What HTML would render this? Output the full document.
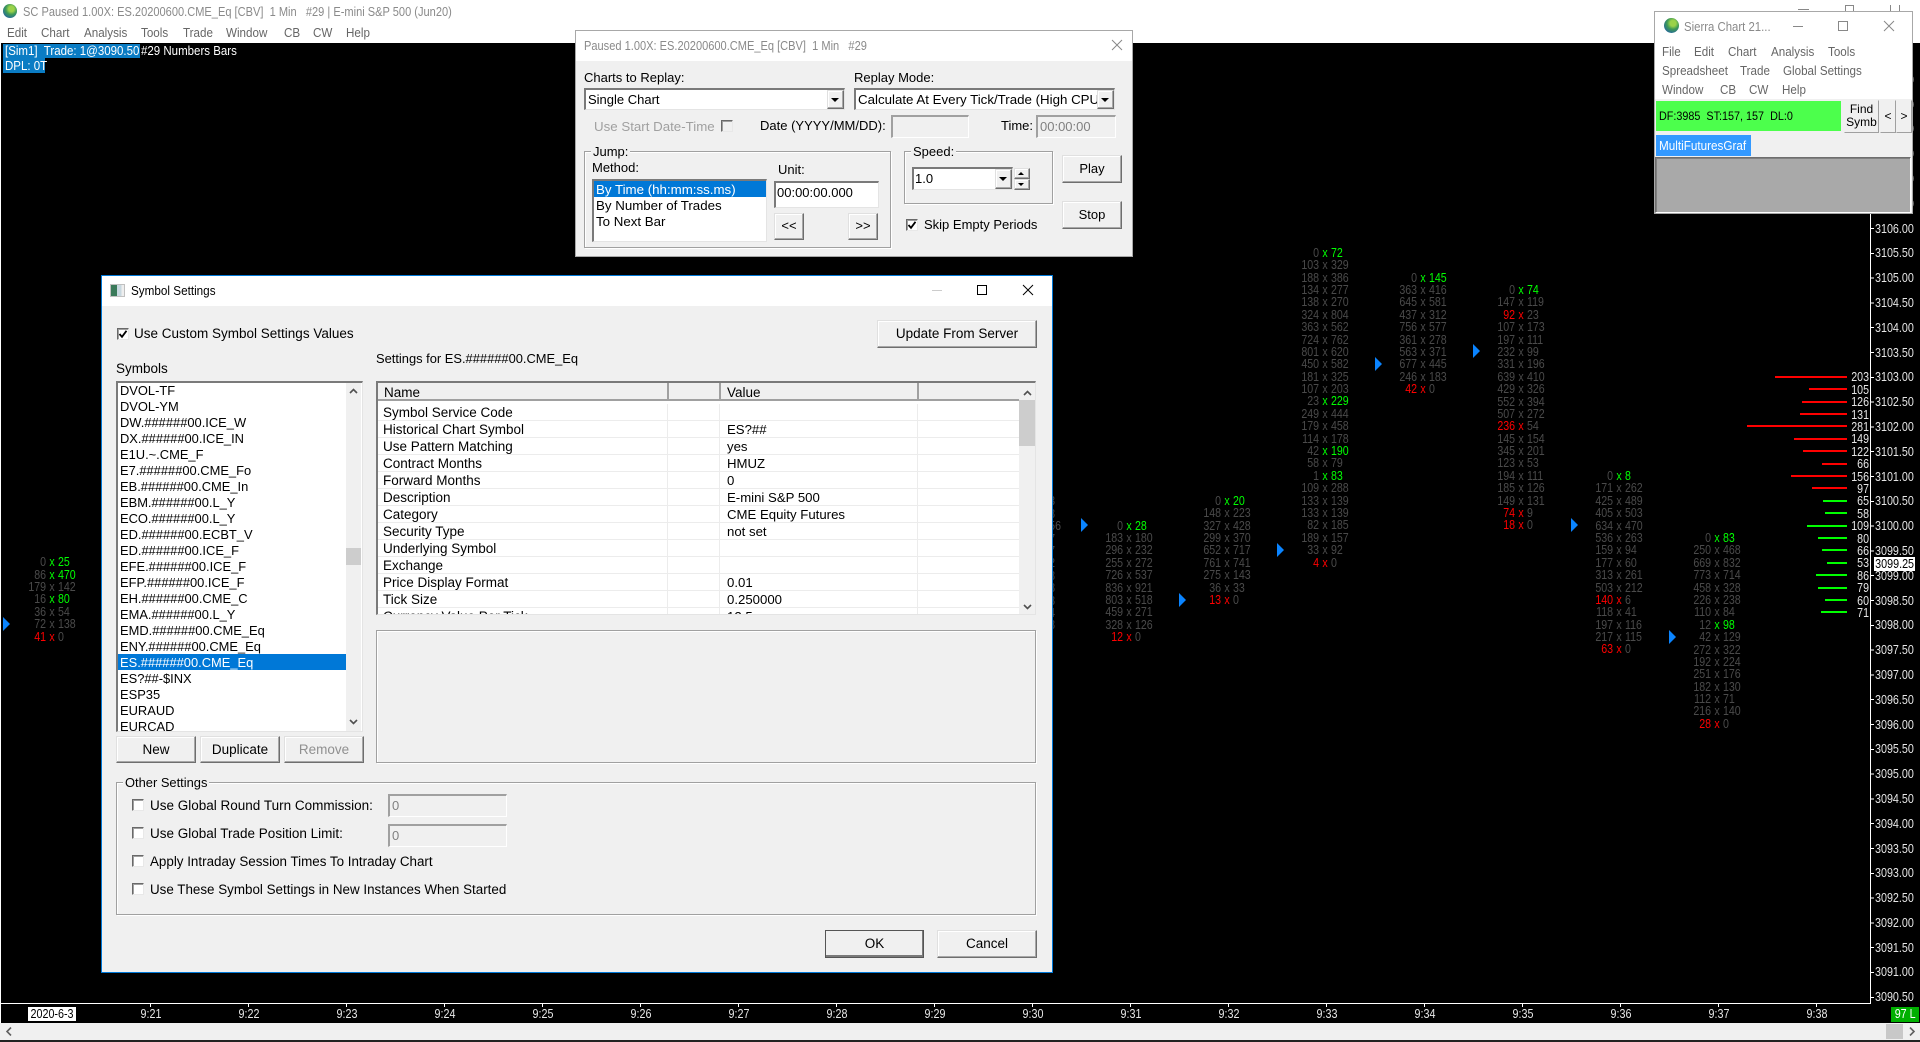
<!DOCTYPE html>
<html><head><meta charset="utf-8"><title>Sierra Chart</title>
<style>
html,body{margin:0;padding:0;width:1920px;height:1042px;overflow:hidden;background:#fff;font-family:"Liberation Sans",sans-serif;}
div{box-sizing:border-box}
.a{position:absolute}
.t{position:absolute;white-space:pre;line-height:16px;font-size:13px;color:#000;margin-top:1px}
.m{position:absolute;white-space:pre;line-height:16px;font-size:12.5px;color:#666;transform:scaleX(.93);transform-origin:0 0}
.btn{position:absolute;background:#f0f0f0;border:1px solid;border-color:#e0e0e0 #6e6e6e #6e6e6e #e0e0e0;box-shadow:inset -1px -1px 0 #a8a8a8,inset 1px 1px 0 #fff;text-align:center;font-size:13px;color:#000;display:flex;align-items:center;justify-content:center;white-space:pre;padding-bottom:2px}
.sunk{position:absolute;background:#fff;border-style:solid;border-width:2px 1px 1px 2px;border-color:#7a7a7a #e4e4e4 #e4e4e4 #7a7a7a}
.dis{background:#f0f0f0;border-color:#a0a0a0 #fff #fff #a0a0a0;color:#808080;font-size:13px;line-height:20px;padding-left:2px}
.grp{position:absolute;border:1px solid #a0a0a0;box-shadow:inset 1px 1px 0 #fff,1px 1px 0 #fff}
.cb{position:absolute;width:12px;height:12px;background:#fff;border:1px solid;border-color:#696969 #e8e8e8 #e8e8e8 #696969;box-shadow:inset 1px 1px 0 #a0a0a0}
.lab{position:absolute;background:#f0f0f0;padding:0 2px;white-space:pre;font-size:13px;line-height:14px;margin-top:1px}
.dn{position:absolute;width:0;height:0;border-left:4px solid transparent;border-right:4px solid transparent;border-top:4px solid #000}
.up{position:absolute;width:0;height:0;border-left:4px solid transparent;border-right:4px solid transparent;border-bottom:4px solid #000}
.arr{position:absolute;width:0;height:0;border-top:7px solid transparent;border-bottom:7px solid transparent;border-left:7px solid #0a84ff}
.c{position:absolute;width:100px;font-size:12.5px;line-height:12.4px;color:#4a4a4a;transform:scaleX(.85);transform-origin:50px 0}
.c p,.col p{margin:0;height:12.4px;white-space:pre}
.c i{display:inline-block;width:43px;text-align:right;font-style:normal}
.c u{display:inline-block;width:14px;text-align:center;text-decoration:none}
.c s{text-decoration:none}
p.g u,p.g s{color:#0f0}
p.r i,p.r u{color:#f00}
.tm{position:absolute;top:1006px;width:40px;text-align:center;font-size:12.5px;line-height:16px;color:#e6e6e6;transform:scaleX(.86)}
.tk{position:absolute;top:1003px;width:1px;height:4px;background:#fff}
.vb{position:absolute;height:2px}
.rb{background:#f00}.gb{background:#0f0}
.gr{position:absolute;left:0;width:100%;height:17px;font-size:13.5px;line-height:17px;border-bottom:1px solid #ececec;white-space:pre}
.gr span{position:absolute;top:0}
.gr .n{left:5px}.gr .v{left:349px;font-size:13.2px}
.li p{margin:0;height:16px;line-height:18px;padding-left:2px;font-size:12.9px;white-space:pre}
.box{position:absolute;display:flex;justify-content:center;white-space:nowrap;font-size:12.5px}
.box span{display:block;flex:none;transform:scaleX(.86)}
</style></head>
<body>
<div class="a" style="left:0;top:0;width:1920px;height:43px;background:#fff"></div>
<div class="a" style="left:3px;top:4px;width:14px;height:14px;border-radius:50%;background:radial-gradient(circle at 60% 35%,#9bd24a 0 22%,#3f9a55 45%,#1f5fa8 85%)"></div>
<div class="m" style="left:23px;top:4px;font-size:12.5px;color:#8a8a8a;transform:scaleX(.885);transform-origin:0 0">SC Paused 1.00X: ES.20200600.CME_Eq [CBV]  1 Min   #29 | E-mini S&amp;P 500 (Jun20)</div>
<div class="m" style="left:7px;top:25px">Edit</div><div class="m" style="left:41px;top:25px">Chart</div><div class="m" style="left:84px;top:25px">Analysis</div><div class="m" style="left:141px;top:25px">Tools</div><div class="m" style="left:183px;top:25px">Trade</div><div class="m" style="left:226px;top:25px">Window</div><div class="m" style="left:284px;top:25px">CB</div><div class="m" style="left:313px;top:25px">CW</div><div class="m" style="left:346px;top:25px">Help</div>
<div class="a" style="left:1798px;top:9px;width:11px;height:1px;background:#888"></div>
<div class="a" style="left:1845px;top:5px;width:9px;height:7px;border:1px solid #888"></div>
<div class="a" style="left:1890px;top:5px;width:10px;height:6px;border-left:1px solid #888;border-right:1px solid #888"></div>

<!-- chart -->
<div class="a" style="left:1px;top:43px;width:1919px;height:980px;background:#000"></div>
<div class="a" style="left:3px;top:44px;width:137px;height:14px;background:#0a7cc4"></div>
<div class="a" style="left:3px;top:58px;width:42px;height:15px;background:#0a7cc4"></div>
<div class="t" style="left:5px;top:42px;color:#fff;font-size:12.5px;transform:scaleX(.92);transform-origin:0 0">[Sim1]  Trade: 1@3090.50</div>
<div class="t" style="left:141px;top:42px;color:#fff;font-size:12.5px;transform:scaleX(.92);transform-origin:0 0">#29 Numbers Bars</div>
<div class="t" style="left:5px;top:57px;color:#fff;font-size:12.5px;transform:scaleX(.92);transform-origin:0 0">DPL: 0T</div>

<div class="a" style="left:1870px;top:43px;width:1px;height:961px;background:#fff"></div>
<div class="a" style="left:0;top:1003px;width:1870px;height:1px;background:#fff"></div>
<div class="a" style="left:1871px;top:215.6px;width:3px;height:794px;background:repeating-linear-gradient(to bottom,transparent 0 12px,#fff 12px 13px,transparent 13px 24.8px)"></div>

<div class="a col" style="left:1875px;top:67.8px;font-size:12.5px;line-height:24.8px;color:#e6e6e6;transform:scaleX(.86);transform-origin:0 0;white-space:pre">3109.00
3108.50
3108.00
3107.50
3107.00
3106.50
3106.00
3105.50
3105.00
3104.50
3104.00
3103.50
3103.00
3102.50
3102.00
3101.50
3101.00
3100.50
3100.00
3099.50
3099.00
3098.50
3098.00
3097.50
3097.00
3096.50
3096.00
3095.50
3095.00
3094.50
3094.00
3093.50
3093.00
3092.50
3092.00
3091.50
3091.00
3090.50</div>
<div class="box" style="left:1874px;top:557px;width:41px;height:14px;background:#fff;color:#000;line-height:15px"><span>3099.25</span></div>

<!-- volume profile -->
<div class="vb rb" style="left:1775px;top:376px;width:72px"></div>
<div class="vb rb" style="left:1809px;top:388px;width:38px"></div>
<div class="vb rb" style="left:1802px;top:401px;width:45px"></div>
<div class="vb rb" style="left:1800px;top:413px;width:47px"></div>
<div class="vb rb" style="left:1747px;top:425px;width:100px"></div>
<div class="vb rb" style="left:1794px;top:438px;width:53px"></div>
<div class="vb rb" style="left:1803px;top:450px;width:44px"></div>
<div class="vb rb" style="left:1822px;top:463px;width:25px"></div>
<div class="vb rb" style="left:1791px;top:475px;width:56px"></div>
<div class="vb rb" style="left:1812px;top:487px;width:35px"></div>
<div class="vb gb" style="left:1823px;top:500px;width:24px"></div>
<div class="vb gb" style="left:1825px;top:512px;width:22px"></div>
<div class="vb gb" style="left:1807px;top:525px;width:40px"></div>
<div class="vb gb" style="left:1818px;top:537px;width:29px"></div>
<div class="vb gb" style="left:1822px;top:549px;width:25px"></div>
<div class="vb gb" style="left:1827px;top:562px;width:20px"></div>
<div class="vb gb" style="left:1816px;top:574px;width:31px"></div>
<div class="vb gb" style="left:1818px;top:587px;width:29px"></div>
<div class="vb gb" style="left:1825px;top:599px;width:22px"></div>
<div class="vb gb" style="left:1821px;top:611px;width:26px"></div>
<div class="a" style="left:1829px;top:371.3px;width:40px;text-align:right;font-size:12.5px;line-height:12.4px;color:#e6e6e6;transform:scaleX(.85);transform-origin:100% 0;white-space:pre">203
105
126
131
281
149
122
66
156
97
65
58
109
80
66
53
86
79
60
71</div>

<!-- arrows -->
<div class="arr" style="left:3px;top:617px"></div>
<div class="arr" style="left:1081px;top:518px"></div>
<div class="arr" style="left:1179px;top:593px"></div>
<div class="arr" style="left:1277px;top:543px"></div>
<div class="arr" style="left:1375px;top:357px"></div>
<div class="arr" style="left:1473px;top:344px"></div>
<div class="arr" style="left:1571px;top:518px"></div>
<div class="arr" style="left:1669px;top:630px"></div>

<!-- bars -->
<div class="c" style="left:1.7px;top:556.2px">
<p class="g"><i>0</i><u>x</u><s>25</s></p><p class="g"><i>86</i><u>x</u><s>470</s></p><p><i>179</i><u>x</u><s>142</s></p><p class="g"><i>16</i><u>x</u><s>80</s></p><p><i>36</i><u>x</u><s>54</s></p><p><i>72</i><u>x</u><s>138</s></p><p class="r"><i>41</i><u>x</u><s>0</s></p></div>
<div class="a" style="left:1025px;top:495.3px;width:30px;text-align:right;font-size:12.5px;line-height:12.4px;color:#4a4a4a;transform:scaleX(.85);transform-origin:100% 0;white-space:pre">3
8
 
7
7
2
8
8
8
4
8</div>
<div class="a" style="left:1031px;top:520px;width:30px;text-align:right;font-size:12.5px;line-height:12.4px;color:#4a4a4a;transform:scaleX(.85);transform-origin:100% 0">56</div>
<div class="c" style="left:1079.3px;top:519.6px">
<p class="g"><i>0</i><u>x</u><s>28</s></p><p><i>183</i><u>x</u><s>180</s></p><p><i>296</i><u>x</u><s>232</s></p><p><i>255</i><u>x</u><s>272</s></p><p><i>726</i><u>x</u><s>537</s></p><p><i>836</i><u>x</u><s>921</s></p><p><i>803</i><u>x</u><s>518</s></p><p><i>459</i><u>x</u><s>271</s></p><p><i>328</i><u>x</u><s>126</s></p><p class="r"><i>12</i><u>x</u><s>0</s></p></div>
<div class="c" style="left:1177.3px;top:494.8px">
<p class="g"><i>0</i><u>x</u><s>20</s></p><p><i>148</i><u>x</u><s>223</s></p><p><i>327</i><u>x</u><s>428</s></p><p><i>299</i><u>x</u><s>370</s></p><p><i>652</i><u>x</u><s>717</s></p><p><i>761</i><u>x</u><s>741</s></p><p><i>275</i><u>x</u><s>143</s></p><p><i>36</i><u>x</u><s>33</s></p><p class="r"><i>13</i><u>x</u><s>0</s></p></div>
<div class="c" style="left:1275.3px;top:246.8px">
<p class="g"><i>0</i><u>x</u><s>72</s></p><p><i>103</i><u>x</u><s>329</s></p><p><i>188</i><u>x</u><s>386</s></p><p><i>134</i><u>x</u><s>277</s></p><p><i>138</i><u>x</u><s>270</s></p><p><i>324</i><u>x</u><s>804</s></p><p><i>363</i><u>x</u><s>562</s></p><p><i>724</i><u>x</u><s>762</s></p><p><i>801</i><u>x</u><s>620</s></p><p><i>450</i><u>x</u><s>582</s></p><p><i>181</i><u>x</u><s>325</s></p><p><i>107</i><u>x</u><s>203</s></p><p class="g"><i>23</i><u>x</u><s>229</s></p><p><i>249</i><u>x</u><s>444</s></p><p><i>179</i><u>x</u><s>458</s></p><p><i>114</i><u>x</u><s>178</s></p><p class="g"><i>42</i><u>x</u><s>190</s></p><p><i>58</i><u>x</u><s>79</s></p><p class="g"><i>1</i><u>x</u><s>83</s></p><p><i>109</i><u>x</u><s>288</s></p><p><i>133</i><u>x</u><s>139</s></p><p><i>133</i><u>x</u><s>139</s></p><p><i>82</i><u>x</u><s>185</s></p><p><i>189</i><u>x</u><s>157</s></p><p><i>33</i><u>x</u><s>92</s></p><p class="r"><i>4</i><u>x</u><s>0</s></p></div>
<div class="c" style="left:1373.3px;top:271.6px">
<p class="g"><i>0</i><u>x</u><s>145</s></p><p><i>363</i><u>x</u><s>416</s></p><p><i>645</i><u>x</u><s>581</s></p><p><i>437</i><u>x</u><s>312</s></p><p><i>756</i><u>x</u><s>577</s></p><p><i>361</i><u>x</u><s>278</s></p><p><i>563</i><u>x</u><s>371</s></p><p><i>677</i><u>x</u><s>445</s></p><p><i>246</i><u>x</u><s>183</s></p><p class="r"><i>42</i><u>x</u><s>0</s></p></div>
<div class="c" style="left:1471.3px;top:284px">
<p class="g"><i>0</i><u>x</u><s>74</s></p><p><i>147</i><u>x</u><s>119</s></p><p class="r"><i>92</i><u>x</u><s>23</s></p><p><i>107</i><u>x</u><s>173</s></p><p><i>197</i><u>x</u><s>111</s></p><p><i>232</i><u>x</u><s>99</s></p><p><i>331</i><u>x</u><s>196</s></p><p><i>639</i><u>x</u><s>410</s></p><p><i>429</i><u>x</u><s>326</s></p><p><i>552</i><u>x</u><s>394</s></p><p><i>507</i><u>x</u><s>272</s></p><p class="r"><i>236</i><u>x</u><s>54</s></p><p><i>145</i><u>x</u><s>154</s></p><p><i>345</i><u>x</u><s>201</s></p><p><i>123</i><u>x</u><s>53</s></p><p><i>194</i><u>x</u><s>111</s></p><p><i>185</i><u>x</u><s>126</s></p><p><i>149</i><u>x</u><s>131</s></p><p class="r"><i>74</i><u>x</u><s>9</s></p><p class="r"><i>18</i><u>x</u><s>0</s></p></div>
<div class="c" style="left:1569.3px;top:470px">
<p class="g"><i>0</i><u>x</u><s>8</s></p><p><i>171</i><u>x</u><s>262</s></p><p><i>425</i><u>x</u><s>489</s></p><p><i>405</i><u>x</u><s>503</s></p><p><i>634</i><u>x</u><s>470</s></p><p><i>536</i><u>x</u><s>263</s></p><p><i>159</i><u>x</u><s>94</s></p><p><i>177</i><u>x</u><s>60</s></p><p><i>313</i><u>x</u><s>261</s></p><p><i>503</i><u>x</u><s>212</s></p><p class="r"><i>140</i><u>x</u><s>6</s></p><p><i>118</i><u>x</u><s>41</s></p><p><i>197</i><u>x</u><s>116</s></p><p><i>217</i><u>x</u><s>115</s></p><p class="r"><i>63</i><u>x</u><s>0</s></p></div>
<div class="c" style="left:1667.3px;top:532px">
<p class="g"><i>0</i><u>x</u><s>83</s></p><p><i>250</i><u>x</u><s>468</s></p><p><i>669</i><u>x</u><s>832</s></p><p><i>773</i><u>x</u><s>714</s></p><p><i>458</i><u>x</u><s>328</s></p><p><i>226</i><u>x</u><s>238</s></p><p><i>110</i><u>x</u><s>84</s></p><p class="g"><i>12</i><u>x</u><s>98</s></p><p><i>42</i><u>x</u><s>129</s></p><p><i>272</i><u>x</u><s>322</s></p><p><i>192</i><u>x</u><s>224</s></p><p><i>251</i><u>x</u><s>176</s></p><p><i>182</i><u>x</u><s>130</s></p><p><i>112</i><u>x</u><s>71</s></p><p><i>216</i><u>x</u><s>140</s></p><p class="r"><i>28</i><u>x</u><s>0</s></p></div>

<!-- time axis -->
<div class="tk" style="left:150px"></div><div class="tk" style="left:248px"></div><div class="tk" style="left:346px"></div><div class="tk" style="left:444px"></div><div class="tk" style="left:542px"></div><div class="tk" style="left:640px"></div><div class="tk" style="left:738px"></div><div class="tk" style="left:836px"></div><div class="tk" style="left:934px"></div><div class="tk" style="left:1032px"></div><div class="tk" style="left:1130px"></div><div class="tk" style="left:1228px"></div><div class="tk" style="left:1326px"></div><div class="tk" style="left:1424px"></div><div class="tk" style="left:1522px"></div><div class="tk" style="left:1620px"></div><div class="tk" style="left:1718px"></div><div class="tk" style="left:1816px"></div>
<div class="tm" style="left:130.7px">9:21</div><div class="tm" style="left:228.7px">9:22</div><div class="tm" style="left:326.7px">9:23</div><div class="tm" style="left:424.7px">9:24</div><div class="tm" style="left:522.7px">9:25</div><div class="tm" style="left:620.7px">9:26</div><div class="tm" style="left:718.7px">9:27</div><div class="tm" style="left:816.7px">9:28</div><div class="tm" style="left:914.7px">9:29</div><div class="tm" style="left:1012.7px">9:30</div><div class="tm" style="left:1110.7px">9:31</div><div class="tm" style="left:1208.7px">9:32</div><div class="tm" style="left:1306.7px">9:33</div><div class="tm" style="left:1404.7px">9:34</div><div class="tm" style="left:1502.7px">9:35</div><div class="tm" style="left:1600.7px">9:36</div><div class="tm" style="left:1698.7px">9:37</div><div class="tm" style="left:1796.7px">9:38</div>
<div class="box" style="left:28px;top:1007px;width:48px;height:14px;background:#fff;color:#000;line-height:14px"><span>2020-6-3</span></div>
<div class="box" style="left:1891px;top:1007px;width:28px;height:15px;background:#00b000;color:#fff;line-height:15px"><span>97 L</span></div>
<!-- bottom scroll -->
<div class="a" style="left:0;top:1023px;width:1920px;height:17px;background:#f0f0f0"></div>
<div class="a" style="left:1886px;top:1024px;width:17px;height:15px;background:#c8c8c8"></div>
<svg class="a" style="left:6px;top:1027px" width="6" height="9"><path d="M5 .5L1 4.5l4 4" fill="none" stroke="#606060" stroke-width="1.6"/></svg>
<svg class="a" style="left:1909px;top:1027px" width="6" height="9"><path d="M1 .5l4 4-4 4" fill="none" stroke="#606060" stroke-width="1.6"/></svg>
<div class="a" style="left:0;top:1040px;width:1920px;height:2px;background:#222"></div>

<!-- Replay dialog -->
<div class="a" style="left:575px;top:30px;width:558px;height:227px;background:#f0f0f0;border:1px solid #a8a8a8"></div>
<div class="a" style="left:576px;top:31px;width:556px;height:30px;background:#fff"></div>
<div class="t" style="left:584px;top:37px;font-size:12.5px;color:#8a8a8a;transform:scaleX(.885);transform-origin:0 0">Paused 1.00X: ES.20200600.CME_Eq [CBV]  1 Min   #29</div>
<svg class="a" style="left:1111px;top:39px" width="12" height="12"><path d="M1 1l10 10M11 1L1 11" stroke="#888" fill="none"/></svg>
<div class="t" style="left:584px;top:69px">Charts to Replay:</div>
<div class="t" style="left:854px;top:69px">Replay Mode:</div>
<div class="sunk" style="left:584px;top:88px;width:261px;height:22px"></div>
<div class="t" style="left:588px;top:91px">Single Chart</div>
<div class="btn" style="left:827px;top:90px;width:17px;height:19px"></div><div class="dn" style="left:831px;top:98px"></div>
<div class="sunk" style="left:854px;top:88px;width:261px;height:22px;overflow:hidden"><div class="t" style="left:2px;top:1px;width:240px;overflow:hidden;font-size:13.3px">Calculate At Every Tick/Trade (High CPU)</div></div>
<div class="btn" style="left:1097px;top:90px;width:17px;height:19px"></div><div class="dn" style="left:1101px;top:98px"></div>
<div class="t" style="left:594px;top:118px;color:#a0a0a0;font-size:13.3px">Use Start Date-Time</div>
<div class="cb" style="left:721px;top:120px;background:#f0f0f0"></div>
<div class="t" style="left:760px;top:117px">Date (YYYY/MM/DD):</div>
<div class="sunk dis" style="left:891px;top:115px;width:78px;height:23px"></div>
<div class="t" style="left:1001px;top:117px">Time:</div>
<div class="sunk dis" style="left:1036px;top:115px;width:80px;height:23px">00:00:00</div>

<div class="grp" style="left:584px;top:151px;width:307px;height:97px"></div>
<div class="lab" style="left:591px;top:144px">Jump:</div>
<div class="t" style="left:592px;top:159px">Method:</div>
<div class="t" style="left:778px;top:161px">Unit:</div>
<div class="sunk" style="left:592px;top:179px;width:175px;height:63px"></div>
<div class="a" style="left:594px;top:181px;width:172px;height:16px;background:#0078d7"></div>
<div class="t" style="left:596px;top:181px;color:#fff;font-size:13.3px">By Time (hh:mm:ss.ms)</div>
<div class="t" style="left:596px;top:197px;font-size:13.3px">By Number of Trades</div>
<div class="t" style="left:596px;top:213px;font-size:13.3px">To Next Bar</div>
<div class="sunk" style="left:774px;top:181px;width:105px;height:27px"></div>
<div class="t" style="left:777px;top:184px">00:00:00.000</div>
<div class="btn" style="left:774px;top:213px;width:30px;height:27px">&lt;&lt;</div>
<div class="btn" style="left:848px;top:213px;width:30px;height:27px">&gt;&gt;</div>

<div class="grp" style="left:904px;top:151px;width:149px;height:53px"></div>
<div class="lab" style="left:911px;top:144px">Speed:</div>
<div class="sunk" style="left:912px;top:167px;width:101px;height:23px"></div>
<div class="t" style="left:915px;top:170px">1.0</div>
<div class="btn" style="left:995px;top:169px;width:17px;height:20px"></div><div class="dn" style="left:999px;top:177px"></div>
<div class="btn" style="left:1014px;top:168px;width:16px;height:11px"></div><div class="up" style="left:1018px;top:172px;border-left-width:3px;border-right-width:3px;border-bottom-width:3px"></div>
<div class="btn" style="left:1014px;top:179px;width:16px;height:11px"></div><div class="dn" style="left:1018px;top:183px;border-left-width:3px;border-right-width:3px;border-top-width:3px"></div>
<div class="btn" style="left:1062px;top:155px;width:60px;height:28px">Play</div>
<div class="btn" style="left:1062px;top:201px;width:60px;height:28px">Stop</div>
<div class="cb" style="left:906px;top:219px"></div>
<svg class="a" style="left:907px;top:220px" width="10" height="10"><path d="M1.5 5l2.5 2.8L8.5 1.8" fill="none" stroke="#000" stroke-width="1.8"/></svg>
<div class="t" style="left:924px;top:216px">Skip Empty Periods</div>

<!-- Sierra small window -->
<div class="a" style="left:1654px;top:11px;width:259px;height:203px;background:#fff;border:1px solid #a8a8a8"></div>
<div class="a" style="left:1664px;top:18px;width:15px;height:15px;border-radius:50%;background:radial-gradient(circle at 60% 35%,#9bd24a 0 22%,#3f9a55 45%,#1f5fa8 85%)"></div>
<div class="t" style="left:1684px;top:18px;font-size:12.5px;color:#8a8a8a;transform:scaleX(.91);transform-origin:0 0">Sierra Chart 21...</div>
<div class="a" style="left:1793px;top:26px;width:10px;height:1px;background:#888"></div>
<div class="a" style="left:1838px;top:21px;width:10px;height:10px;border:1px solid #888"></div>
<svg class="a" style="left:1883px;top:20px" width="12" height="12"><path d="M1 1l10 10M11 1L1 11" stroke="#888" fill="none"/></svg>
<div class="m" style="left:1662px;top:44px">File</div><div class="m" style="left:1694px;top:44px">Edit</div><div class="m" style="left:1728px;top:44px">Chart</div><div class="m" style="left:1771px;top:44px">Analysis</div><div class="m" style="left:1828px;top:44px">Tools</div>
<div class="m" style="left:1662px;top:63px">Spreadsheet</div><div class="m" style="left:1740px;top:63px">Trade</div><div class="m" style="left:1783px;top:63px">Global Settings</div>
<div class="m" style="left:1662px;top:82px">Window</div><div class="m" style="left:1720px;top:82px">CB</div><div class="m" style="left:1749px;top:82px">CW</div><div class="m" style="left:1782px;top:82px">Help</div>
<div class="a" style="left:1655px;top:99px;width:257px;height:114px;background:#f0f0f0"></div>
<div class="a" style="left:1656px;top:101px;width:185px;height:30px;background:#4cff4c"></div>
<div class="t" style="left:1659px;top:107px;font-size:12px;white-space:pre;transform:scaleX(.9);transform-origin:0 0">DF:3985  ST:157, 157  DL:0</div>
<div class="btn" style="left:1844px;top:100px;width:35px;height:33px;font-size:12px;line-height:13px;border-color:#f0f0f0 #a0a0a0 #a0a0a0 #f0f0f0;box-shadow:none">Find
Symb</div>
<div class="btn" style="left:1880px;top:100px;width:16px;height:33px;font-size:12px;border-color:#f0f0f0 #a0a0a0 #a0a0a0 #f0f0f0;box-shadow:none">&lt;</div>
<div class="btn" style="left:1896px;top:100px;width:16px;height:33px;font-size:12px;border-color:#f0f0f0 #a0a0a0 #a0a0a0 #f0f0f0;box-shadow:none">&gt;</div>
<div class="a" style="left:1656px;top:135px;width:95px;height:21px;background:#3399ff"></div>
<div class="t" style="left:1659px;top:137px;color:#fff;transform:scaleX(.9);transform-origin:0 0">MultiFuturesGraf</div>
<div class="a" style="left:1655px;top:157px;width:256px;height:56px;background:#a9a9a9;border:1px solid;border-color:#6e6e6e #fff #fff #6e6e6e;box-shadow:inset 1px 1px 0 #808080"></div>

<!-- Symbol Settings -->
<div class="a" style="left:101px;top:275px;width:952px;height:698px;background:#f0f0f0;border:1px solid #0078d7"></div>
<div class="a" style="left:102px;top:276px;width:950px;height:30px;background:#fff"></div>
<div class="a" style="left:110px;top:284px;width:15px;height:13px;background:linear-gradient(90deg,#3a7a5a 0 45%,#c8d8e0 45% 80%,#eee 80%);border:1px solid #c0c0c0"></div>
<div class="t" style="left:131px;top:282px;font-size:13px;transform:scaleX(.9);transform-origin:0 0">Symbol Settings</div>
<div class="a" style="left:932px;top:290px;width:10px;height:1px;background:#ccc"></div>
<div class="a" style="left:977px;top:285px;width:10px;height:10px;border:1px solid #000"></div>
<svg class="a" style="left:1022px;top:284px" width="12" height="12"><path d="M1 1l10 10M11 1L1 11" stroke="#000" fill="none"/></svg>
<div class="cb" style="left:117px;top:328px"></div>
<svg class="a" style="left:118px;top:329px" width="10" height="10"><path d="M1.5 5l2.5 2.8L8.5 1.8" fill="none" stroke="#000" stroke-width="1.8"/></svg>
<div class="t" style="left:134px;top:325px;font-size:13.5px">Use Custom Symbol Settings Values</div>
<div class="t" style="left:116px;top:360px;font-size:13.5px">Symbols</div>
<div class="t" style="left:376px;top:350px;font-size:12.9px">Settings for ES.######00.CME_Eq</div>
<div class="btn" style="left:877px;top:320px;width:160px;height:28px;font-size:13.5px">Update From Server</div>

<div class="sunk li" style="left:116px;top:381px;width:247px;height:351px;overflow:hidden;padding-top:0">
<div style="margin-top:-1px;width:228px">
<p>DVOL-TF</p><p>DVOL-YM</p><p>DW.######00.ICE_W</p><p>DX.######00.ICE_IN</p><p>E1U.~.CME_F</p><p>E7.######00.CME_Fo</p><p>EB.######00.CME_In</p><p>EBM.######00.L_Y</p><p>ECO.######00.L_Y</p><p>ED.######00.ECBT_V</p><p>ED.######00.ICE_F</p><p>EFE.######00.ICE_F</p><p>EFP.######00.ICE_F</p><p>EH.######00.CME_C</p><p>EMA.######00.L_Y</p><p>EMD.######00.CME_Eq</p><p>ENY.######00.CME_Eq</p><p style="background:#0078d7;color:#fff">ES.######00.CME_Eq</p><p>ES?##-$INX</p><p>ESP35</p><p>EURAUD</p><p>EURCAD</p>
</div></div>
<div class="a" style="left:346px;top:383px;width:15px;height:348px;background:#f0f0f0"></div>
<svg class="a" style="left:349px;top:388px" width="9" height="6"><path d="M1 5l3.5-3.5L8 5" fill="none" stroke="#505050" stroke-width="1.6"/></svg>
<div class="a" style="left:346px;top:548px;width:15px;height:17px;background:#cdcdcd"></div>
<svg class="a" style="left:349px;top:719px" width="9" height="6"><path d="M1 1l3.5 3.5L8 1" fill="none" stroke="#505050" stroke-width="1.6"/></svg>
<div class="btn" style="left:116px;top:736px;width:80px;height:27px;font-size:13.5px;padding-bottom:0">New</div>
<div class="btn" style="left:200px;top:736px;width:80px;height:27px;font-size:13.5px;padding-bottom:0">Duplicate</div>
<div class="btn" style="left:284px;top:736px;width:80px;height:27px;font-size:13.5px;color:#909090;padding-bottom:0">Remove</div>

<!-- grid -->
<div class="sunk" style="left:376px;top:381px;width:660px;height:234px;overflow:hidden">
<div class="a" style="left:0;top:0;width:656px;height:18px;background:#f0f0f0;border-bottom:2px solid #a0a0a0"></div>
<div class="t" style="left:6px;top:1px;font-size:13.5px">Name</div>
<div class="t" style="left:349px;top:1px;font-size:13.5px">Value</div>
<div class="a" style="left:289px;top:0;width:2px;height:18px;background:#a0a0a0"></div>
<div class="a" style="left:341px;top:0;width:2px;height:18px;background:#a0a0a0"></div>
<div class="a" style="left:539px;top:0;width:2px;height:18px;background:#a0a0a0"></div>
<div class="a" style="left:0;top:21px;width:641px;height:214px">
<div class="gr" style="top:0"><span class="n">Symbol Service Code</span></div>
<div class="gr" style="top:17px"><span class="n">Historical Chart Symbol</span><span class="v">ES?##</span></div>
<div class="gr" style="top:34px"><span class="n">Use Pattern Matching</span><span class="v">yes</span></div>
<div class="gr" style="top:51px"><span class="n">Contract Months</span><span class="v">HMUZ</span></div>
<div class="gr" style="top:68px"><span class="n">Forward Months</span><span class="v">0</span></div>
<div class="gr" style="top:85px"><span class="n">Description</span><span class="v">E-mini S&amp;P 500</span></div>
<div class="gr" style="top:102px"><span class="n">Category</span><span class="v">CME Equity Futures</span></div>
<div class="gr" style="top:119px"><span class="n">Security Type</span><span class="v">not set</span></div>
<div class="gr" style="top:136px"><span class="n">Underlying Symbol</span></div>
<div class="gr" style="top:153px"><span class="n">Exchange</span></div>
<div class="gr" style="top:170px"><span class="n">Price Display Format</span><span class="v">0.01</span></div>
<div class="gr" style="top:187px"><span class="n">Tick Size</span><span class="v">0.250000</span></div>
<div class="gr" style="top:204px"><span class="n">Currency Value Per Tick</span><span class="v">12.5</span></div>
<div class="a" style="left:289px;top:0;width:1px;height:220px;background:#ececec"></div>
<div class="a" style="left:341px;top:0;width:1px;height:220px;background:#ececec"></div>
<div class="a" style="left:539px;top:0;width:1px;height:220px;background:#ececec"></div>
</div>
<div class="a" style="left:641px;top:0;width:16px;height:232px;background:#f0f0f0"></div>
<div class="a" style="left:641px;top:17px;width:16px;height:46px;background:#cdcdcd"></div>
<svg class="a" style="left:645px;top:7px" width="9" height="6"><path d="M1 5l3.5-3.5L8 5" fill="none" stroke="#505050" stroke-width="1.6"/></svg>
<svg class="a" style="left:645px;top:221px" width="9" height="6"><path d="M1 1l3.5 3.5L8 1" fill="none" stroke="#505050" stroke-width="1.6"/></svg>
</div>

<div class="grp" style="left:376px;top:630px;width:660px;height:133px"></div>

<div class="grp" style="left:116px;top:782px;width:920px;height:133px"></div>
<div class="lab" style="left:123px;top:775px;font-size:12.9px">Other Settings</div>
<div class="cb" style="left:132px;top:799px"></div><div class="t" style="left:150px;top:797px;font-size:13.5px">Use Global Round Turn Commission:</div>
<div class="sunk dis" style="left:388px;top:794px;width:119px;height:23px">0</div>
<div class="cb" style="left:132px;top:827px"></div><div class="t" style="left:150px;top:825px;font-size:13.5px">Use Global Trade Position Limit:</div>
<div class="sunk dis" style="left:388px;top:824px;width:119px;height:23px">0</div>
<div class="cb" style="left:132px;top:855px"></div><div class="t" style="left:150px;top:853px;font-size:13.4px">Apply Intraday Session Times To Intraday Chart</div>
<div class="cb" style="left:132px;top:883px"></div><div class="t" style="left:150px;top:881px;font-size:13.4px">Use These Symbol Settings in New Instances When Started</div>
<div class="btn" style="left:825px;top:930px;width:99px;height:28px;font-size:13.5px;border-color:#555;box-shadow:inset 0 -2px 0 #7a7a7a,inset -1px 0 0 #7a7a7a">OK</div>
<div class="btn" style="left:937px;top:930px;width:100px;height:28px;font-size:13.5px">Cancel</div>
</body></html>
